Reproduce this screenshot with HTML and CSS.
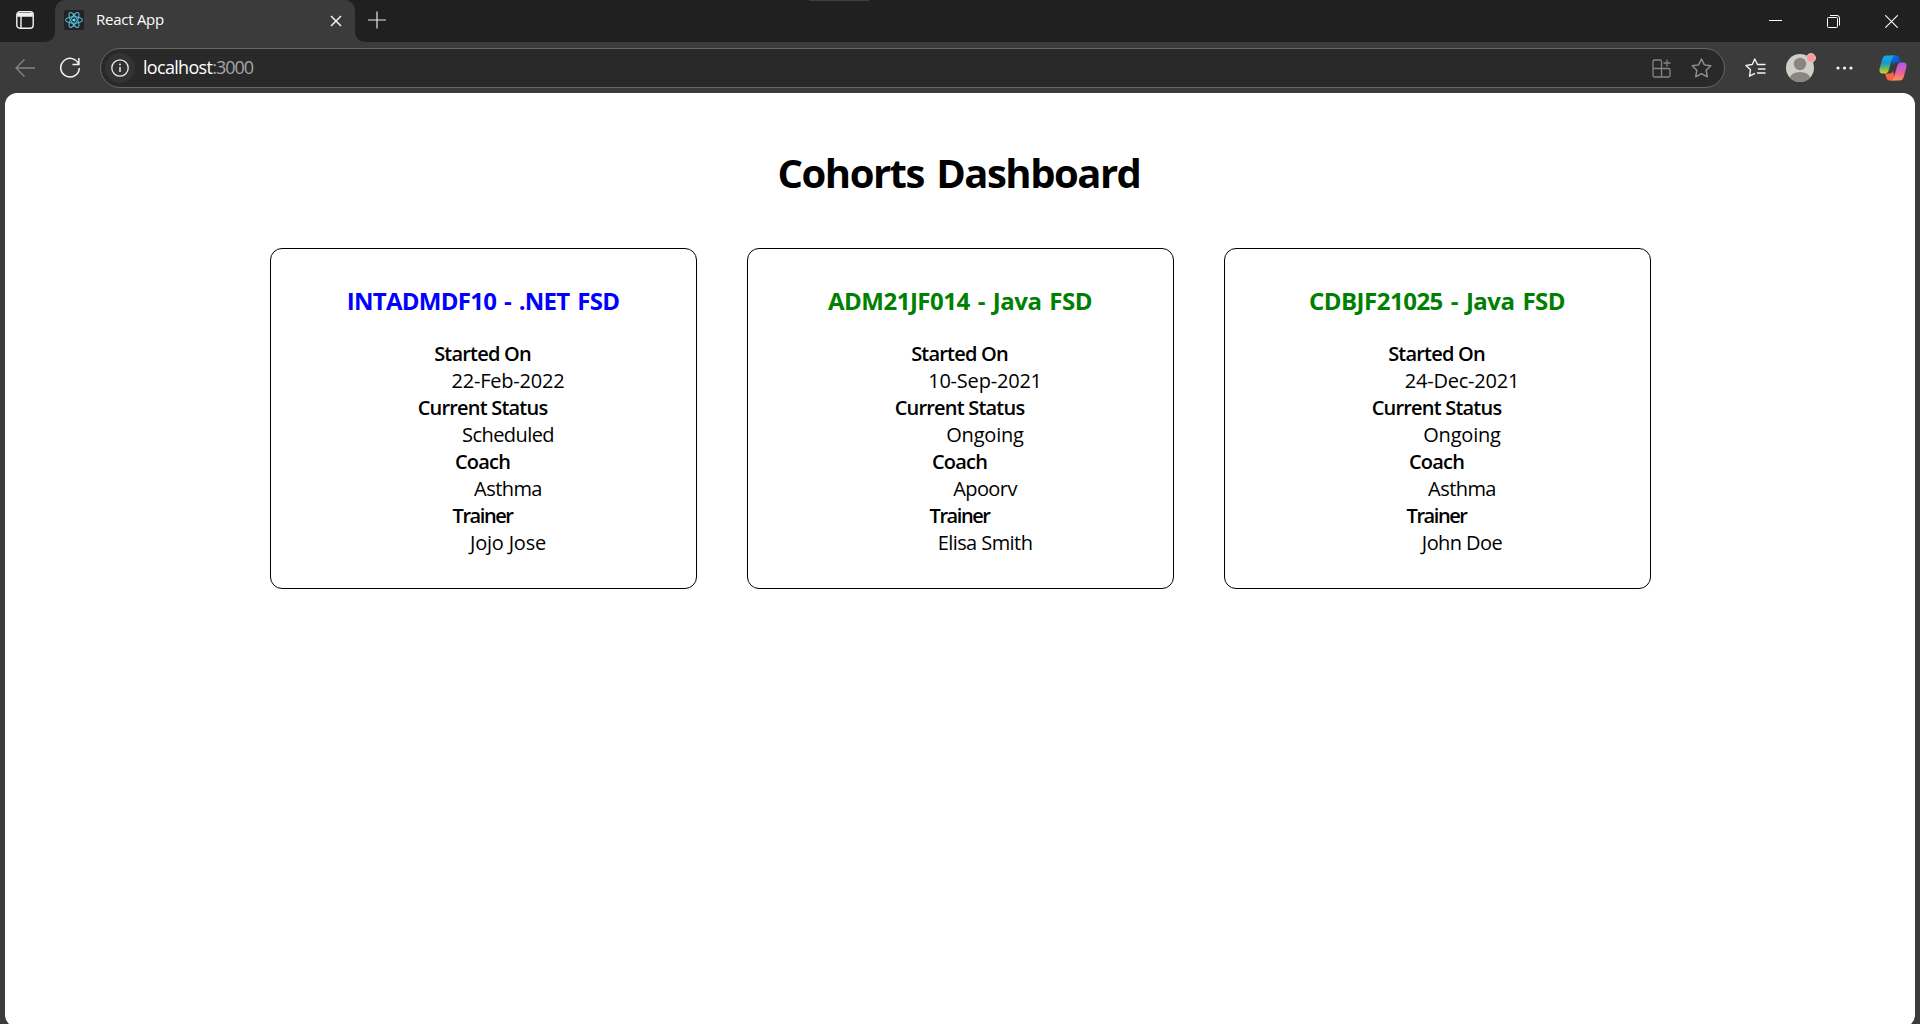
FILE: index.html
```html
<!DOCTYPE html>
<html lang="en">
<head>
<meta charset="utf-8">
<title>React App</title>
<link rel="stylesheet" href="styles.css">
</head>
<body>
<div class="browser">
  <header class="tabstrip">
    <div class="workspace">
      <svg width="18" height="18" viewBox="0 0 18 18" fill="none" stroke="#f2f2f2" stroke-width="1.4"><rect x=".8" y=".8" width="16.4" height="16.4" rx="3"/><path d="M5 5v12"/><path d="M1.5 3.2h15M1.2 4.5h15.6" stroke-width="2.6"/></svg>
    </div>
    <div class="tab">
      <svg class="favicon" width="20" height="20" viewBox="0 0 20 20"><rect width="20" height="20" rx="2" fill="#222"/><g fill="none" stroke="#58bfdc" stroke-width="1.05"><ellipse cx="10" cy="10" rx="8.4" ry="3.2"/><ellipse cx="10" cy="10" rx="8.4" ry="3.2" transform="rotate(60 10 10)"/><ellipse cx="10" cy="10" rx="8.4" ry="3.2" transform="rotate(120 10 10)"/></g><circle cx="10" cy="10" r="1.6" fill="#61dafb"/></svg>
      <span class="tab-title">React App</span>
      <svg class="tab-close" width="12" height="12" viewBox="0 0 12 12" fill="none" stroke="#f2f2f2" stroke-width="1.5"><path d="M1 1l10 10M11 1L1 11"/></svg>
    </div>
    <svg class="new-tab" width="18" height="18" viewBox="0 0 18 18" fill="none" stroke="#e8e8e8" stroke-width="1.2"><path d="M9 .5v17M0 9h18"/></svg>
    <div class="drag-handle"></div>
    <div class="window-controls">
      <svg width="13" height="13" viewBox="0 0 13 13" fill="none" stroke="#fff"><path d="M0 5.5h13"/></svg>
      <svg width="13" height="13" viewBox="0 0 13 13" fill="none" stroke="#fff"><rect x=".5" y="2.5" width="10" height="10" rx="1"/><path d="M3 .5h7a2.5 2.5 0 0 1 2.500 2.500v7.500"/></svg>
      <svg width="13" height="13" viewBox="0 0 13 13" fill="none" stroke="#fff" stroke-width="1.1"><path d="M.3.3l12.400 12.400M12.700.3L.3 12.700"/></svg>
    </div>
  </header>
  <div class="toolbar">
    <svg class="back" width="20" height="18" viewBox="0 0 20 18" fill="none" stroke="#858585" stroke-width="1.3"><path d="M20 9H1M9.500.5L1 9l8.500 8.500"/></svg>
    <svg class="reload" width="22" height="22" viewBox="0 0 22 22" fill="none" stroke="#f4f4f4" stroke-width="1.5"><path d="M19.700 7.400A9.300 9.300 0 1 0 20.300 11M19.900 1v6.500h-6.500"/></svg>
    <div class="address">
      <span class="site-info"><svg width="18" height="18" viewBox="0 0 18 18" fill="none" stroke="#eee" stroke-width="1.3"><circle cx="9" cy="9" r="8.200"/><path d="M9 8v5" stroke-width="1.500"/><circle cx="9" cy="5.500" r=".9" fill="#eee" stroke="none"/></svg></span>
      <span class="url">localhost<span class="port">:3000</span></span>
      <svg class="apps" width="19" height="19" viewBox="0 0 19 19" fill="none" stroke="#858585" stroke-width="1.300"><path d="M9.500 9.500V2.500a1.500 1.500 0 0 0-1.500-1.500H2.500A1.500 1.500 0 0 0 1 2.500v14A1.500 1.500 0 0 0 2.500 18h14a1.500 1.500 0 0 0 1.500-1.500V11a1.500 1.500 0 0 0-1.500-1.500zM1 9.500h8.500V18M15 .5v7M11.500 4h7"/></svg>
      <svg width="21" height="20" viewBox="0 0 21 20" fill="none" stroke="#929292" stroke-width="1.400" stroke-linejoin="round"><path d="M10.500 1l2.900 5.900 6.400.9-4.600 4.500 1.100 6.500-5.800-3.100-5.800 3.100 1.100-6.500L1.200 7.800l6.400-.9z"/></svg>
    </div>
    <svg class="favorites" width="21" height="20" viewBox="0 0 21 20" fill="none" stroke="#f4f4f4" stroke-width="1.400" stroke-linejoin="round" stroke-linecap="round"><path d="M12.500 6.500L9.800 1 7.200 6.500 1 7.400l4.500 4.400-1 6.400 5-2.600M12.500 6.500H20M13.500 11H20M12.500 15H20"/></svg>
    <svg class="profile" width="30" height="30" viewBox="0 0 30 30"><defs><clipPath id="avatar"><circle cx="14" cy="16" r="14"/></clipPath></defs><circle cx="14" cy="16" r="14" fill="#d0cec9"/><g fill="#8a8580" clip-path="url(#avatar)"><circle cx="14" cy="12" r="6.200"/><ellipse cx="14" cy="27" rx="10.500" ry="7"/></g><circle cx="25" cy="6" r="4.500" fill="#ff9b98" stroke="#cbd3d0" stroke-width=".9"/></svg>
    <svg class="more" width="17" height="4" viewBox="0 0 17 4" fill="#f4f4f4"><circle cx="2" cy="2" r="1.600"/><circle cx="8.500" cy="2" r="1.600"/><circle cx="15" cy="2" r="1.600"/></svg>
    <svg class="copilot" width="28" height="26" viewBox="0 0 28 26">
      <defs>
        <linearGradient id="cool" x1="0" y1="0" x2="0" y2="1"><stop offset="0" stop-color="#18a9f0"/><stop offset=".4" stop-color="#1698d0"/><stop offset=".7" stop-color="#5cb968"/><stop offset="1" stop-color="#f1ce0b"/></linearGradient>
        <linearGradient id="warm" x1="0" y1="0" x2="0" y2="1"><stop offset="0" stop-color="#a45cf0"/><stop offset=".5" stop-color="#e95aa8"/><stop offset="1" stop-color="#ff944f"/></linearGradient>
        <linearGradient id="fold" x1="0" y1="0" x2="1" y2="1"><stop offset="0" stop-color="#087bdd"/><stop offset="1" stop-color="#1a37b8"/></linearGradient>
      </defs>
      <path d="M12 .5h5.500c2 0 2.800 1.500 3.300 3.200L22 7.500h-4.500c-2 0-3 1-3.500 3z" fill="url(#fold)"/>
      <path d="M16 25.500h-5.500c-2 0-2.800-1.500-3.300-3.500L6 18.500h4.500c2 0 3-1 3.500-3z" fill="#f5663d"/>
      <path d="M7.500.5h9c-2 0-2.800 1.200-3.400 3.200L9.800 15c-.7 2.300-1.700 3.500-4 3.500H4C.5 18.500 0 16 .8 13L3 5C3.800 2 5 .5 7.500.5z" fill="url(#cool)"/>
      <path d="M20.500 25.500h-9c2 0 2.800-1.200 3.400-3.200L18.200 11c.7-2.300 1.700-3.500 4-3.500H24c3.500 0 4 2.500 3.200 5.500L25 21c-.8 3-2 4.500-4.500 4.500z" fill="url(#warm)"/>
    </svg>
  </div>
  <main class="page">
    <h1>Cohorts Dashboard</h1>
    <div class="cohorts">
      <section class="card">
        <h3 class="scheduled tight">INTADMDF10 - .NET FSD</h3>
        <dl>
          <dt>Started On</dt><dd class="wide">22-Feb-2022</dd>
          <dt>Current Status</dt><dd>Scheduled</dd>
          <dt>Coach</dt><dd>Asthma</dd>
          <dt class="trainer">Trainer</dt><dd class="wide">Jojo Jose</dd>
        </dl>
      </section>
      <section class="card">
        <h3 class="ongoing">ADM21JF014 - Java FSD</h3>
        <dl>
          <dt>Started On</dt><dd class="wide">10-Sep-2021</dd>
          <dt>Current Status</dt><dd class="wide">Ongoing</dd>
          <dt>Coach</dt><dd>Apoorv</dd>
          <dt class="trainer">Trainer</dt><dd>Elisa Smith</dd>
        </dl>
      </section>
      <section class="card">
        <h3 class="ongoing">CDBJF21025 - Java FSD</h3>
        <dl>
          <dt>Started On</dt><dd class="wide">24-Dec-2021</dd>
          <dt>Current Status</dt><dd class="wide">Ongoing</dd>
          <dt>Coach</dt><dd>Asthma</dd>
          <dt class="trainer">Trainer</dt><dd>John Doe</dd>
        </dl>
      </section>
    </div>
  </main>
</div>
</body>
</html>
```
FILE: styles.css
```css
* { box-sizing: border-box; }
body {
  margin: 0;
  font-family: "Segoe UI", "Open Sans", "Noto Sans", sans-serif;
  color: #000;
}
svg { display: block; flex: none; }
.browser {
  height: 1024px;
  overflow: hidden;
  background: #3b3b3b;
}

/* Tab strip */
.tabstrip {
  display: flex;
  height: 42px;
  background: linear-gradient(#3b3b3b, #3b3b3b) 45px 0 / 320px 42px no-repeat, #202020;
}
.workspace {
  width: 55px;
  padding: 11px 0 0 16px;
  background: #202020;
  border-bottom-right-radius: 10px;
}
.tab {
  display: flex;
  width: 300px;
  padding: 0 13px 0 9px;
  align-items: center;
  gap: 12px;
  background: #3b3b3b;
  border-radius: 10px 10px 0 0;
  box-shadow: 0 -10px 0 #202020;
  color: #fff;
}
.workspace, .tab { flex: none; }
.favicon { margin-bottom: 2px; }
.tab-title { font-size: 15px; line-height: 20px; letter-spacing: -.26px; padding-bottom: 4px; }
.tab-close { margin-left: auto; }
.new-tab {
  box-sizing: content-box;
  padding: 11px 0 13px 13px;
  background: #202020;
  border-bottom-left-radius: 10px;
}
.drag-handle { width: 60px; height: 1px; margin-left: 423px; background: #3d3f3f; }
.window-controls { display: flex; gap: 45px; margin: 15px 22px 0 auto; }

/* Toolbar */
.toolbar { display: flex; height: 51px; padding-top: 1px; align-items: center; }
.back { margin-left: 15px; }
.reload { margin-left: 24px; }
.address {
  display: flex;
  align-items: center;
  width: 1625px;
  height: 40px;
  margin-left: 19px;
  padding: 0 12px 0 4px;
  border: 1px solid #676767;
  border-radius: 20px;
  background: #292929;
}
.site-info {
  display: grid;
  place-items: center;
  width: 30px;
  height: 30px;
  border-radius: 50%;
  background: #333;
}
.url { margin: -3px auto 0 8px; font-size: 18px; letter-spacing: -.69px; color: #fff; }
.port { letter-spacing: -1.03px; color: #a6a6a6; }
.apps { margin-right: 20px; }
.favorites { margin-left: 20px; }
.profile { margin: -2px 0 0 20px; }
.more { margin-left: 20px; }
.copilot { margin-left: 26px; }

/* Page */
.page {
  height: 934px;
  margin: 0 5px;
  padding-top: 53px;
  border-radius: 12px;
  background: #fff;
  text-align: center;
}
h1 { margin: 0 0 48px; font-size: 40px; line-height: 54px; letter-spacing: -1.5px; word-spacing: 3.5px; text-indent: -2px; }
.cohorts { display: flex; justify-content: center; gap: 50px; }
.card { width: 427px; height: 341px; padding-top: 36px; border: 1px solid #000; border-radius: 12px; }
h3 { margin: 0 0 23px; font-size: 24px; line-height: 32px; letter-spacing: -.5px; word-spacing: 2.2px; }
.tight { letter-spacing: -.72px; }
.scheduled { color: blue; }
.ongoing { color: green; }
dl { margin: 0; font-size: 20px; line-height: 27px; }
dt { font-weight: 600; letter-spacing: -.8px; text-indent: -1px; }
.trainer { letter-spacing: -1.45px; }
dd { margin-left: 50px; letter-spacing: -.57px; }
.wide { letter-spacing: -.2px; }
```
